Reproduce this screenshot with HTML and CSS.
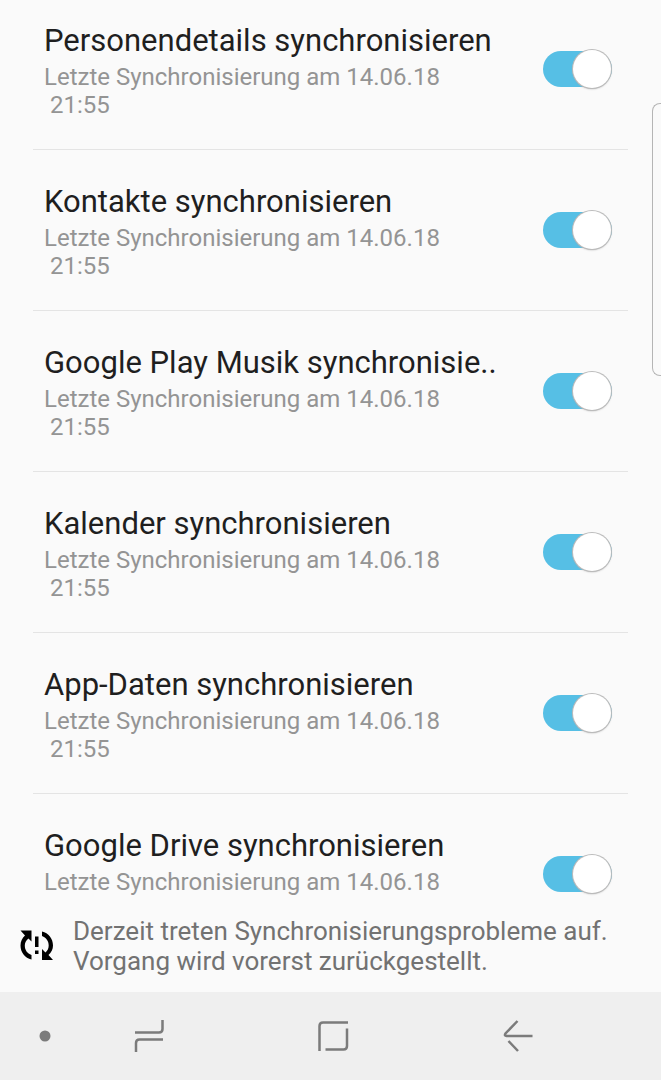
FILE: index.html
```html
<!DOCTYPE html>
<html lang="de">
<head>
<meta charset="utf-8">
<meta name="viewport" content="width=device-width, initial-scale=1">
<title>Konto synchronisieren</title>
<link rel="stylesheet" href="styles.css">
</head>
<body>
<div class="screen">
  <main class="list">
    <label class="row">
      <span class="row-text"><span class="title">Personendetails synchronisieren</span><span class="sub">Letzte Synchronisierung am 14.06.18<br>&nbsp;21:55</span></span>
      <input class="switch" type="checkbox" role="switch" checked>
    </label>
    <label class="row">
      <span class="row-text"><span class="title">Kontakte synchronisieren</span><span class="sub">Letzte Synchronisierung am 14.06.18<br>&nbsp;21:55</span></span>
      <input class="switch" type="checkbox" role="switch" checked>
    </label>
    <label class="row">
      <span class="row-text"><span class="title">Google Play Musik synchronisie..</span><span class="sub">Letzte Synchronisierung am 14.06.18<br>&nbsp;21:55</span></span>
      <input class="switch" type="checkbox" role="switch" checked>
    </label>
    <label class="row">
      <span class="row-text"><span class="title">Kalender synchronisieren</span><span class="sub">Letzte Synchronisierung am 14.06.18<br>&nbsp;21:55</span></span>
      <input class="switch" type="checkbox" role="switch" checked>
    </label>
    <label class="row">
      <span class="row-text"><span class="title">App-Daten synchronisieren</span><span class="sub">Letzte Synchronisierung am 14.06.18<br>&nbsp;21:55</span></span>
      <input class="switch" type="checkbox" role="switch" checked>
    </label>
    <label class="row">
      <span class="row-text"><span class="title">Google Drive synchronisieren</span><span class="sub">Letzte Synchronisierung am 14.06.18</span></span>
      <input class="switch" type="checkbox" role="switch" checked>
    </label>
  </main>
  <div class="edge-handle"></div>
  <footer class="notice">
    <svg class="notice-icon" viewBox="0 0 36 32" aria-hidden="true">
      <path d="M1.500 0.500H12.500V11.500L9.500 8.500C7 10.500 5.800 12.500 5.800 15.500c0 4.500 2.500 8 6.700 9.500v4.500C6 28 1.500 22.500 1.500 15.500c0-4 1.700-7.500 4.500-10z"/>
      <path d="M23 1.500c6.500 1.500 11 7 11 14 0 4-1.700 7-4.500 9.500L34 30H23V19l3.500 3.500c2-2 3.200-4 3.200-7 0-4.500-2.500-8-6.700-9.500z"/>
      <path d="M16 6.500h3.500v10.500H16zM16 20.500h3.500v3.500H16z"/>
    </svg>
    <p class="notice-text">Derzeit treten Synchronisierungsprobleme auf. Vorgang wird vorerst zurückgestellt.</p>
  </footer>
  <nav class="navbar">
    <button class="nav-button" type="button" aria-label="Leiste ausblenden"><svg class="dot" viewBox="0 0 12 12"><circle cx="6" cy="6" r="5.500"/></svg></button>
    <button class="nav-button" type="button" aria-label="Letzte Apps"><svg class="icon" viewBox="0 0 36 36"><path d="M4 14.500h24q3.500 0 3.500-3.500V2M32 21.500H8.500q-3.500 0-3.500 3.500v9"/></svg></button>
    <button class="nav-button" type="button" aria-label="Startseite"><svg class="icon" viewBox="0 0 36 36"><path d="M4.500 33V8q0-3.500 3.500-3.500h25M10.500 31.500H28.500q3.500 0 3.500-3.500V10.500"/></svg></button>
    <button class="nav-button" type="button" aria-label="Zurück"><svg class="icon" viewBox="0 0 36 36"><path d="M17.500 3 5.500 15.500q-1.500 2.500 1 2.500H32.500M8.500 23l9.500 10"/></svg></button>
  </nav>
</div>
</body>
</html>
```
FILE: styles.css
```css
* { box-sizing: border-box; }

body {
  margin: 0;
  background: #fafafa;
  font-family: Roboto, "Liberation Sans", sans-serif;
}

.screen {
  position: relative;
  display: flex;
  flex-direction: column;
  height: 100vh;
  overflow: hidden;
}

.list {
  flex: 1;
  min-height: 0;
  padding: 0 33px;
  overflow: hidden;
}

.row {
  display: flex;
  align-items: center;
  justify-content: space-between;
  padding: 34px 16px 30px 11px;
  border-bottom: 1px solid #e4e4e4;
}

.row:first-child { padding-top: 23px; }

.title,
.sub { display: block; }

.title {
  margin-bottom: 4px;
  color: #1f1f1f;
  font-size: 31px;
  line-height: 36px;
  white-space: nowrap;
}

.sub {
  min-height: 56px;
  color: #949494;
  font-size: 24px;
  line-height: 28px;
}

.switch {
  appearance: none;
  flex: none;
  display: flex;
  align-items: center;
  justify-content: flex-end;
  width: 69px;
  height: 36px;
  margin: 0 0 4px;
  border-radius: 18px;
  background: #56bfe5;
}

.switch::before {
  content: "";
  flex: none;
  width: 38px;
  height: 38px;
  margin-right: 1px;
  border-radius: 50%;
  background: #fff;
  box-shadow: 0 0 0 1px #bbb, 0 1px 2px 0 #aaa;
}

.switch:not(:checked) {
  justify-content: flex-start;
  background: #c8c8c8;
}

.edge-handle {
  position: absolute;
  top: 103px;
  right: 0;
  width: 9px;
  height: 273px;
  border: 1px solid #b5b5b5;
  border-right: 0;
  border-radius: 8px 0 0 8px;
}

.notice {
  display: flex;
  align-items: center;
  gap: 18px;
  padding: 18px 20px 16px 19px;
}

.notice-icon {
  flex: none;
  width: 36px;
  height: 32px;
}

.notice-text {
  margin: 0;
  color: #727272;
  font-size: 26px;
  line-height: 30px;
}

.navbar {
  display: grid;
  grid-template-columns: 25px repeat(3, 1fr);
  height: 88px;
  padding: 0 51px 0 32px;
  background: #efefef;
}

.nav-button {
  display: flex;
  align-items: center;
  justify-content: center;
  padding: 0;
  border: 0;
  background: none;
}

.dot {
  width: 12px;
  height: 12px;
  fill: #7b7b7b;
}

.icon {
  width: 36px;
  height: 36px;
  fill: none;
  stroke: #7b7b7b;
  stroke-width: 2.500;
}
```
